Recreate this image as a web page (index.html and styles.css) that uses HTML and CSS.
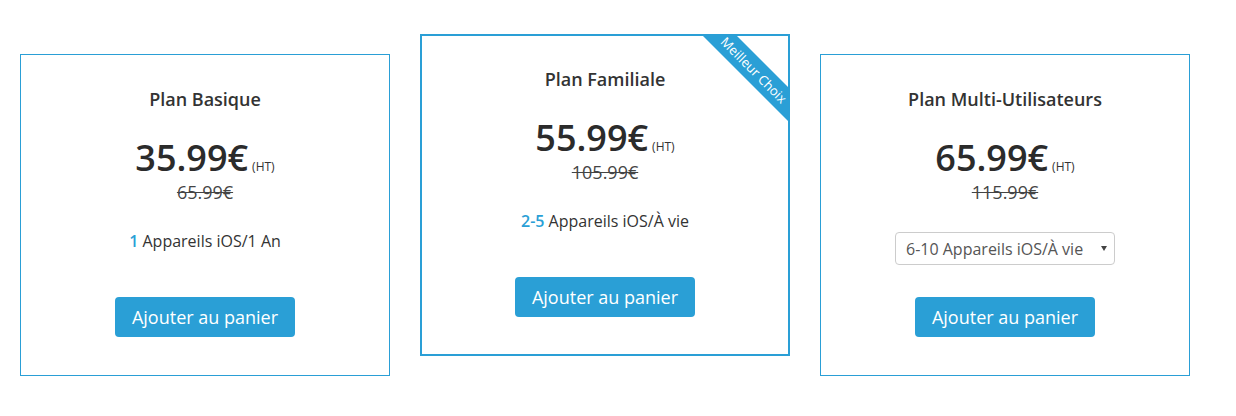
FILE: index.html
```html
<!DOCTYPE html>
<html lang="fr">
<head>
<meta charset="utf-8">
<title>Plans</title>
<link rel="stylesheet" href="styles.css">
</head>
<body>
<div class="pricing">
  <div class="card">
    <h3 class="title">Plan Basique</h3>
    <div class="price">35.99€<span class="ht">(HT)</span></div>
    <div class="old">65.99€</div>
    <div class="features"><p class="feat"><b>1</b> Appareils iOS/1 An</p></div>
    <button class="btn">Ajouter au panier</button>
  </div>
  <div class="card featured">
    <div class="ribbon">Meilleur Choix</div>
    <h3 class="title">Plan Familiale</h3>
    <div class="price">55.99€<span class="ht">(HT)</span></div>
    <div class="old">105.99€</div>
    <div class="features"><p class="feat"><b>2-5</b> Appareils iOS/À vie</p></div>
    <button class="btn">Ajouter au panier</button>
  </div>
  <div class="card">
    <h3 class="title">Plan Multi-Utilisateurs</h3>
    <div class="price">65.99€<span class="ht">(HT)</span></div>
    <div class="old">115.99€</div>
    <div class="features">
      <div class="select-wrap">
        <select class="select">
          <option>6-10 Appareils iOS/À vie</option>
        </select>
        <span class="caret"></span>
      </div>
    </div>
    <button class="btn">Ajouter au panier</button>
  </div>
</div>
</body>
</html>
```
FILE: styles.css
```css
* { box-sizing: border-box; }
body {
  margin: 0;
  background: #fff;
  font-family: "Open Sans", "Liberation Sans", sans-serif;
  color: #333;
}
.pricing {
  display: flex;
  align-items: flex-start;
  gap: 30px;
  padding: 34px 0 0 20px;
}
.card {
  position: relative;
  width: 370px;
  margin-top: 20px;
  border: 1px solid #2a9fd6;
  padding: 32px 0 38px;
  display: flex;
  flex-direction: column;
  align-items: center;
  overflow: hidden;
}
.card.featured {
  margin-top: 0;
  border-width: 2px;
  padding: 31px 0 37px;
}
.title {
  margin: 0;
  font-size: 18px;
  line-height: 24px;
  font-weight: 600;
  color: #333;
}
.price {
  margin-top: 29px;
  font-size: 36px;
  line-height: 36px;
  font-weight: 600;
  color: #2b2b2b;
}
.ht {
  font-size: 12px;
  line-height: 1;
  font-weight: 400;
  margin-left: 4px;
  color: #333;
}
.old {
  margin-top: 5px;
  font-size: 18px;
  line-height: 22px;
  color: #444;
  text-decoration: line-through;
}
.features {
  margin-top: 27px;
  height: 67px;
}
.feat {
  margin: 0;
  font-size: 16px;
  line-height: 22px;
  color: #333;
}
.feat b {
  font-weight: 600;
  color: #2a9fd6;
}
.select-wrap {
  position: relative;
  margin-top: 2px;
}
.select {
  appearance: none;
  -webkit-appearance: none;
  width: 220px;
  height: 33px;
  border: 1px solid #ccc;
  border-radius: 4px;
  background: #fff;
  padding: 0 0 0 10px;
  font-family: inherit;
  font-size: 16px;
  color: #555;
}
.caret {
  position: absolute;
  right: 8px;
  top: 14px;
  border-left: 3px solid transparent;
  border-right: 3px solid transparent;
  border-top: 5px solid #444;
  pointer-events: none;
}
.btn {
  height: 40px;
  padding: 0 17px;
  border: 0;
  border-radius: 4px;
  background: #2a9fd6;
  color: #fff;
  font-family: inherit;
  font-size: 18px;
  font-weight: 400;
}
.ribbon {
  position: absolute;
  top: 22px;
  right: -41px;
  width: 150px;
  height: 24px;
  line-height: 24px;
  background: #2a9fd6;
  color: #fff;
  font-size: 13px;
  text-align: center;
  transform: rotate(45deg);
}
```
